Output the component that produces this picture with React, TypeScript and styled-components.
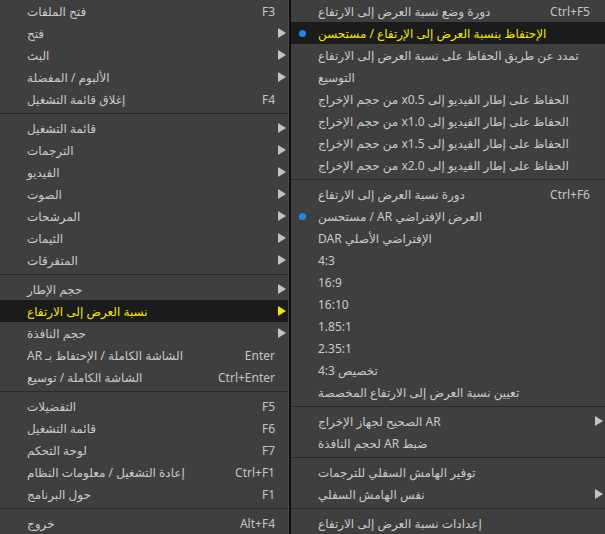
import React from "react";
import styled, { createGlobalStyle } from "styled-components";

const GlobalStyle = createGlobalStyle`
  html, body {
    margin: 0;
    padding: 0;
    background: #3f3f3f;
  }
  body {
    font-family: "Noto Sans", "DejaVu Sans", sans-serif;
  }
`;

type Item =
  | { sep: true }
  | {
      sep?: false;
      label: string;
      shortcut?: string;
      sub?: boolean;
      active?: boolean;
      dot?: boolean;
    };

const mainItems: Item[] = [
  { label: "فتح الملفات", shortcut: "F3" },
  { label: "فتح", sub: true },
  { label: "البث", sub: true },
  { label: "الألبوم / المفضلة", sub: true },
  { label: "إغلاق قائمة التشغيل", shortcut: "F4" },
  { sep: true },
  { label: "قائمة التشغيل", sub: true },
  { label: "الترجمات", sub: true },
  { label: "الفيديو", sub: true },
  { label: "الصوت", sub: true },
  { label: "المرشحات", sub: true },
  { label: "الثيمات", sub: true },
  { label: "المتفرقات", sub: true },
  { sep: true },
  { label: "حجم الإطار", sub: true },
  { label: "نسبة العرض إلى الارتفاع", sub: true, active: true },
  { label: "حجم النافذة", sub: true },
  { label: "الشاشة الكاملة / الإحتفاظ بـ AR", shortcut: "Enter" },
  { label: "الشاشة الكاملة / توسيع", shortcut: "Ctrl+Enter" },
  { sep: true },
  { label: "التفضيلات", shortcut: "F5" },
  { label: "قائمة التشغيل", shortcut: "F6" },
  { label: "لوحة التحكم", shortcut: "F7" },
  { label: "إعادة التشغيل / معلومات النظام", shortcut: "Ctrl+F1" },
  { label: "حول البرنامج", shortcut: "F1" },
  { sep: true },
  { label: "خروج", shortcut: "Alt+F4" },
];

const subItems: Item[] = [
  { label: "دورة وضع نسبة العرض إلى الارتفاع", shortcut: "Ctrl+F5" },
  { label: "الإحتفاظ بنسبة العرض إلى الإرتفاع / مستحسن", dot: true, active: true },
  { label: "تمدد عن طريق الحفاظ على نسبة العرض إلى الارتفاع" },
  { label: "التوسيع" },
  { label: "الحفاظ على إطار الفيديو إلى x0.5 من حجم الإخراج" },
  { label: "الحفاظ على إطار الفيديو إلى x1.0 من حجم الإخراج" },
  { label: "الحفاظ على إطار الفيديو إلى x1.5 من حجم الإخراج" },
  { label: "الحفاظ على إطار الفيديو إلى x2.0 من حجم الإخراج" },
  { sep: true },
  { label: "دورة نسبة العرض إلى الارتفاع", shortcut: "Ctrl+F6" },
  { label: "العرض الإفتراضي AR / مستحسن", dot: true },
  { label: "الإفتراضي الأصلي DAR" },
  { label: "4:3" },
  { label: "16:9" },
  { label: "16:10" },
  { label: "1.85:1" },
  { label: "2.35:1" },
  { label: "تخصيص 4:3" },
  { label: "تعيين نسبة العرض إلى الارتفاع المخصصة" },
  { sep: true },
  { label: "AR الصحيح لجهاز الإخراج", sub: true },
  { label: "ضبط AR لحجم النافذة" },
  { sep: true },
  { label: "توفير الهامش السفلي للترجمات" },
  { label: "نفس الهامش السفلي", sub: true },
  { sep: true },
  { label: "إعدادات نسبة العرض إلى الارتفاع" },
];

const Screen = styled.div`
  display: flex;
  width: 605px;
  height: 534px;
  overflow: hidden;
  background: #3f3f3f;
`;

const Menu = styled.div<{ $width: number; $sub?: boolean }>`
  display: flex;
  flex-direction: column;
  width: ${(p) => p.$width}px;
  flex-shrink: 0;
  background: #3f3f3f;
  border-left: ${(p) => (p.$sub ? "2px solid #0e0e0e" : "none")};
  border-right: ${(p) => (p.$sub ? "none" : "1px solid #4b4b4b")};
`;

const Row = styled.div<{ $active?: boolean; $tail: number }>`
  display: grid;
  grid-template-columns: 27px 1fr auto ${(p) => p.$tail}px;
  align-items: center;
  height: 22px;
  background: ${(p) => (p.$active ? "#1b1b1b" : "transparent")};
  color: ${(p) => (p.$active ? "#f2e600" : "#c9c9c9")};
  font-size: 12px;
  white-space: nowrap;
`;

const Gutter = styled.div`
  display: flex;
  align-items: center;
  padding-left: 8px;
`;

const Dot = styled.span`
  width: 7px;
  height: 7px;
  border-radius: 50%;
  background: #1f86f2;
`;

const Label = styled.span`
  justify-self: start;
  direction: rtl;
  unicode-bidi: isolate;
`;

const Shortcut = styled.span`
  color: #c4c4c4;
  font-size: 12px;
`;

const Arrow = styled.span<{ $active?: boolean }>`
  justify-self: end;
  margin-right: 2px;
  width: 0;
  height: 0;
  border-top: 5px solid transparent;
  border-bottom: 5px solid transparent;
  border-left: 8px solid ${(p) => (p.$active ? "#f2e600" : "#c3c3c3")};
`;

const Separator = styled.div`
  height: 7px;
  display: flex;
  align-items: center;
  &::after {
    content: "";
    flex: 1;
    height: 1px;
    background: #2a2a2a;
  }
`;

const MenuList: React.FC<{ items: Item[]; width: number; tail: number; sub?: boolean }> = ({
  items,
  width,
  tail,
  sub,
}) => (
  <Menu $width={width} $sub={sub}>
    {items.map((it, i) =>
      it.sep ? (
        <Separator key={i} />
      ) : (
        <Row key={i} $active={it.active} $tail={tail}>
          <Gutter>{it.dot && <Dot />}</Gutter>
          <Label>{it.label}</Label>
          <Shortcut>{it.shortcut}</Shortcut>
          {it.sub ? <Arrow $active={it.active} /> : <span />}
        </Row>
      )
    )}
  </Menu>
);

const App: React.FC = () => (
  <>
    <GlobalStyle />
    <Screen>
      <MenuList items={mainItems} width={288} tail={13} />
      <MenuList items={subItems} width={314} tail={15} sub />
    </Screen>
  </>
);

export default App;
